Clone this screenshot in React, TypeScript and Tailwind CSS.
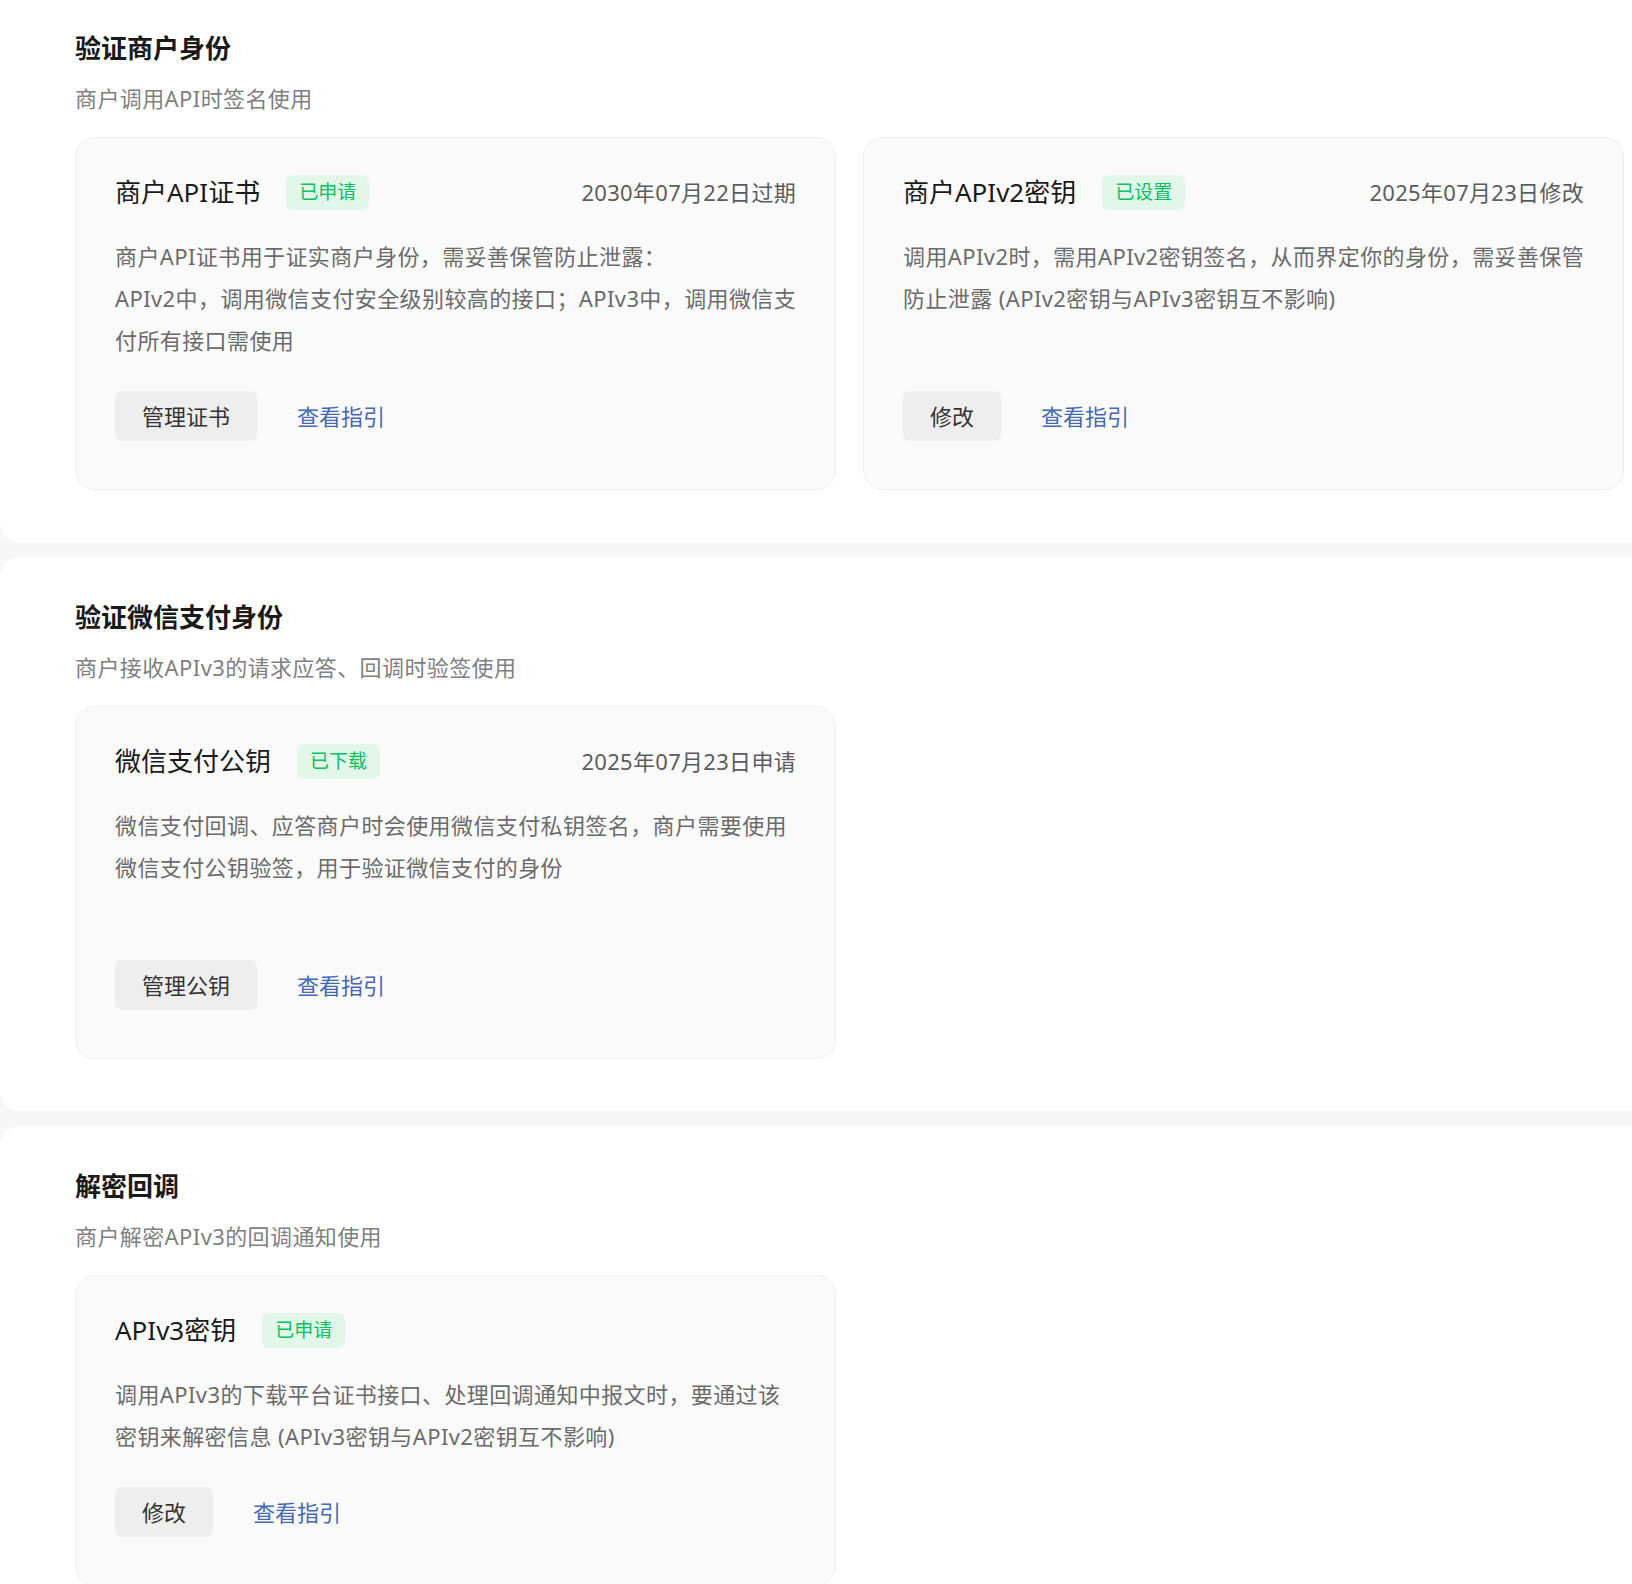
import React from "react";

type CardProps = {
  title: string;
  badge: string;
  date?: string;
  lines: string[];
  button: string;
  minDesc?: boolean;
};

function Card({ title, badge, date, lines, button, minDesc = true }: CardProps) {
  return (
    <div className="flex w-[761px] flex-col rounded-[20px] border border-[#efefef] bg-[#fafafa] px-[39px] pb-[48px] pt-[37px]">
      <div className="flex h-[35px] items-center">
        <span className="text-[26px] leading-[35px] text-[#1a1a1a]">{title}</span>
        <span className="ml-[26px] flex h-[35px] items-center rounded-[7px] bg-[#e3f6ea] px-[13px] text-[19px] text-[#07c160]">
          {badge}
        </span>
        {date && (
          <span className="ml-auto text-[22px] leading-[35px] tracking-[0.3px] text-[#5c5c5c]">{date}</span>
        )}
      </div>
      <div
        className={`mt-[25px] text-[22px] leading-[42px] tracking-[0.4px] text-[#6b6b6b] ${minDesc ? "min-h-[126px]" : ""}`}
      >
        {lines.map((l, i) => (
          <div key={i} className="whitespace-nowrap">
            {l}
          </div>
        ))}
      </div>
      <div className="mt-[30px] flex items-center">
        <button className="h-[50px] rounded-[7px] bg-[#eeeeee] px-[27px] text-[22px] text-[#333333]">
          {button}
        </button>
        <a className="ml-[40px] text-[22px] text-[#4467b6]">查看指引</a>
      </div>
    </div>
  );
}

function Section({
  title,
  subtitle,
  first,
  children,
}: {
  title: string;
  subtitle: string;
  first?: boolean;
  children: React.ReactNode;
}) {
  return (
    <section
      className={`w-full bg-white pb-[52px] pl-[75px] ${first ? "rounded-bl-[20px] pt-[30px]" : "rounded-l-[20px] pt-[42px]"}`}
    >
      <h2 className="text-[26px] font-bold leading-[36px] text-[#1a1a1a]">{title}</h2>
      <p className="mt-[17px] text-[22px] leading-[30px] tracking-[0.4px] text-[#7f7f7f]">{subtitle}</p>
      <div className="mt-[24px] flex gap-[27px]">{children}</div>
    </section>
  );
}

export default function App() {
  return (
    <div className="flex min-h-screen w-full flex-col gap-[15px] overflow-hidden bg-[#f7f7f7] font-['Noto_Sans','Noto_Sans_CJK_SC',sans-serif]">
      <Section title="验证商户身份" subtitle="商户调用API时签名使用" first>
        <Card
          title="商户API证书"
          badge="已申请"
          date="2030年07月22日过期"
          lines={[
            "商户API证书用于证实商户身份，需妥善保管防止泄露：",
            "APIv2中，调用微信支付安全级别较高的接口；APIv3中，调用微信支",
            "付所有接口需使用",
          ]}
          button="管理证书"
        />
        <Card
          title="商户APIv2密钥"
          badge="已设置"
          date="2025年07月23日修改"
          lines={[
            "调用APIv2时，需用APIv2密钥签名，从而界定你的身份，需妥善保管",
            "防止泄露 (APIv2密钥与APIv3密钥互不影响)",
          ]}
          button="修改"
        />
      </Section>
      <Section title="验证微信支付身份" subtitle="商户接收APIv3的请求应答、回调时验签使用">
        <Card
          title="微信支付公钥"
          badge="已下载"
          date="2025年07月23日申请"
          lines={[
            "微信支付回调、应答商户时会使用微信支付私钥签名，商户需要使用",
            "微信支付公钥验签，用于验证微信支付的身份",
          ]}
          button="管理公钥"
        />
      </Section>
      <Section title="解密回调" subtitle="商户解密APIv3的回调通知使用">
        <Card
          title="APIv3密钥"
          badge="已申请"
          lines={[
            "调用APIv3的下载平台证书接口、处理回调通知中报文时，要通过该",
            "密钥来解密信息 (APIv3密钥与APIv2密钥互不影响)",
          ]}
          button="修改"
          minDesc={false}
        />
      </Section>
    </div>
  );
}
